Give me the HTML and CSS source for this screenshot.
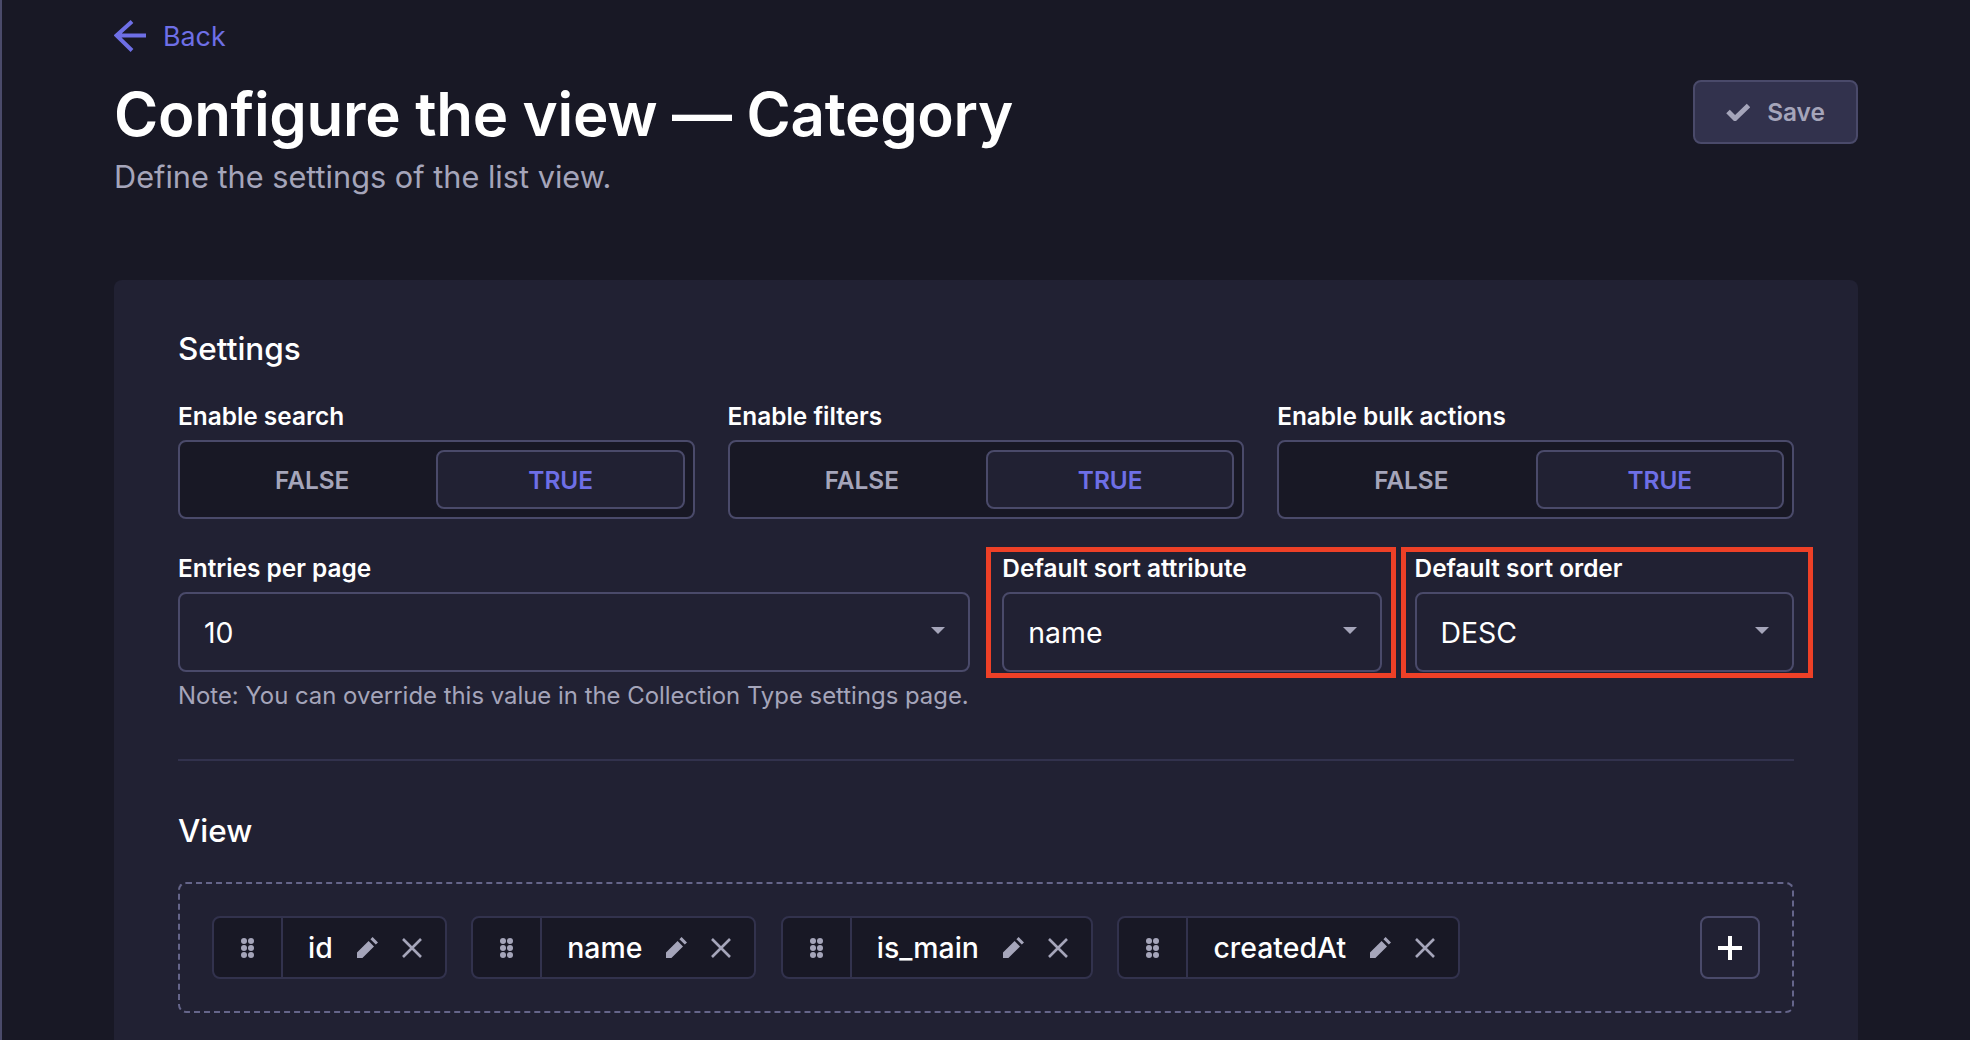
FILE: index.html
```html
<!DOCTYPE html>
<html lang="en">
<head>
<meta charset="utf-8">
<title>Configure the view</title>
<link rel="stylesheet" href="styles.css">
</head>
<body>
<main class="page">
  <a class="back" href="#">
    <svg class="back-icon" viewBox="0 0 32 32" fill="none"><path d="M32 15.5H3.5M18 1.5 2.5 15.5 18 30.5" stroke="currentColor" stroke-width="4"/></svg>
    <span>Back</span>
  </a>
  <header class="head">
    <div>
      <h1 class="title">Configure the view — Category</h1>
      <p class="subtitle">Define the settings of the list view.</p>
    </div>
    <button class="save" type="button">
      <svg class="check" viewBox="0 0 24 18" fill="none"><path d="M2 8.5 9 15.5 22.5 2.5" stroke="currentColor" stroke-width="5"/></svg>
      <span>Save</span>
    </button>
  </header>
  <section class="panel">
    <h2 class="section-title">Settings</h2>
    <div class="grid">
      <div class="field third">
        <label class="label">Enable search</label>
        <div class="toggle"><span class="opt">FALSE</span><span class="opt on">TRUE</span></div>
      </div>
      <div class="field third">
        <label class="label">Enable filters</label>
        <div class="toggle"><span class="opt">FALSE</span><span class="opt on">TRUE</span></div>
      </div>
      <div class="field third">
        <label class="label">Enable bulk actions</label>
        <div class="toggle"><span class="opt">FALSE</span><span class="opt on">TRUE</span></div>
      </div>
      <div class="field half">
        <label class="label">Entries per page</label>
        <div class="select"><span>10</span><i class="caret"></i></div>
        <p class="note">Note: You can override this value in the Collection Type settings page.</p>
      </div>
      <div class="field quarter">
        <span class="mark mark-a"></span>
        <label class="label">Default sort attribute</label>
        <div class="select"><span>name</span><i class="caret"></i></div>
      </div>
      <div class="field quarter">
        <span class="mark mark-b"></span>
        <label class="label">Default sort order</label>
        <div class="select"><span>DESC</span><i class="caret"></i></div>
      </div>
    </div>
    <hr class="rule">
    <h2 class="section-title view-title">View</h2>
    <div class="dash">
      <div class="chip">
        <span class="grip"><svg class="dots" viewBox="0 0 13 20" fill="currentColor"><circle cx="3" cy="3" r="3"/><circle cx="10" cy="3" r="3"/><circle cx="3" cy="10" r="3"/><circle cx="10" cy="10" r="3"/><circle cx="3" cy="17" r="3"/><circle cx="10" cy="17" r="3"/></svg></span>
        <span class="chip-body"><span class="chip-name">id</span>
          <svg class="pencil" viewBox="0 0 21 21" fill="currentColor"><path d="M0 21V15.6L11.6 4 17 9.4 5.4 21ZM13.4 2.2 15.6 0 21 5.4 18.8 7.6Z"/></svg>
          <svg class="close" viewBox="0 0 20 20" fill="none"><path d="M1 1 19 19M19 1 1 19" stroke="currentColor" stroke-width="2.6"/></svg></span>
      </div>
      <div class="chip">
        <span class="grip"><svg class="dots" viewBox="0 0 13 20" fill="currentColor"><circle cx="3" cy="3" r="3"/><circle cx="10" cy="3" r="3"/><circle cx="3" cy="10" r="3"/><circle cx="10" cy="10" r="3"/><circle cx="3" cy="17" r="3"/><circle cx="10" cy="17" r="3"/></svg></span>
        <span class="chip-body"><span class="chip-name">name</span>
          <svg class="pencil" viewBox="0 0 21 21" fill="currentColor"><path d="M0 21V15.6L11.6 4 17 9.4 5.4 21ZM13.4 2.2 15.6 0 21 5.4 18.8 7.6Z"/></svg>
          <svg class="close" viewBox="0 0 20 20" fill="none"><path d="M1 1 19 19M19 1 1 19" stroke="currentColor" stroke-width="2.6"/></svg></span>
      </div>
      <div class="chip">
        <span class="grip"><svg class="dots" viewBox="0 0 13 20" fill="currentColor"><circle cx="3" cy="3" r="3"/><circle cx="10" cy="3" r="3"/><circle cx="3" cy="10" r="3"/><circle cx="10" cy="10" r="3"/><circle cx="3" cy="17" r="3"/><circle cx="10" cy="17" r="3"/></svg></span>
        <span class="chip-body"><span class="chip-name">is_main</span>
          <svg class="pencil" viewBox="0 0 21 21" fill="currentColor"><path d="M0 21V15.6L11.6 4 17 9.4 5.4 21ZM13.4 2.2 15.6 0 21 5.4 18.8 7.6Z"/></svg>
          <svg class="close" viewBox="0 0 20 20" fill="none"><path d="M1 1 19 19M19 1 1 19" stroke="currentColor" stroke-width="2.6"/></svg></span>
      </div>
      <div class="chip">
        <span class="grip"><svg class="dots" viewBox="0 0 13 20" fill="currentColor"><circle cx="3" cy="3" r="3"/><circle cx="10" cy="3" r="3"/><circle cx="3" cy="10" r="3"/><circle cx="10" cy="10" r="3"/><circle cx="3" cy="17" r="3"/><circle cx="10" cy="17" r="3"/></svg></span>
        <span class="chip-body"><span class="chip-name">createdAt</span>
          <svg class="pencil" viewBox="0 0 21 21" fill="currentColor"><path d="M0 21V15.6L11.6 4 17 9.4 5.4 21ZM13.4 2.2 15.6 0 21 5.4 18.8 7.6Z"/></svg>
          <svg class="close" viewBox="0 0 20 20" fill="none"><path d="M1 1 19 19M19 1 1 19" stroke="currentColor" stroke-width="2.6"/></svg></span>
      </div>
      <button class="add" type="button"><svg class="plus" viewBox="0 0 24 24" fill="none"><path d="M12 0V24M0 12H24" stroke="currentColor" stroke-width="4"/></svg></button>
    </div>
  </section>
</main>
</body>
</html>
```
FILE: styles.css
```css
* { box-sizing: border-box; }
html, body { margin: 0; height: 100%; }
body {
  background: #181825;
  color: #fff;
  font-family: Inter, "Noto Sans", sans-serif;
  overflow: hidden;
}
.page {
  height: 1040px;
  overflow: hidden;
  border-left: 2px solid #4a4a6a;
  padding: 20px 112px 0;
}
.back {
  display: flex;
  align-items: center;
  gap: 17px;
  height: 32px;
  color: #6e6fe6;
  font-size: 26.8px;
  text-decoration: none;
}
.back-icon { width: 32px; height: 32px; }
.head {
  display: flex;
  justify-content: space-between;
  align-items: flex-start;
  height: 228px;
  padding-top: 23px;
}
.title {
  margin: 0;
  font-size: 60px;
  line-height: 78px;
  font-weight: 600;
  letter-spacing: -0.3px;
}
.subtitle {
  margin: 4px 0 0;
  font-size: 30.7px;
  line-height: 40px;
  color: #a5a5ba;
  font-weight: 400;
}
.save {
  display: flex;
  align-items: center;
  justify-content: center;
  gap: 17px;
  width: 165px;
  height: 64px;
  margin-top: 5px;
  background: #32324d;
  border: 2px solid #4a4a6a;
  border-radius: 8px;
  color: #a5a5ba;
  font: 600 24.4px Inter, sans-serif;
}
.check { width: 24px; height: 18px; }
.panel {
  height: 760px;
  background: #212133;
  border-radius: 8px 8px 0 0;
  padding: 49px 64px 0;
}
.section-title {
  margin: 0;
  font-size: 31.5px;
  line-height: 40px;
  font-weight: 500;
}
.grid {
  display: grid;
  grid-template-columns: repeat(12, 1fr);
  column-gap: 32.7px;
  row-gap: 33px;
  margin-top: 31px;
}
.field { position: relative; min-width: 0; }
.third { grid-column: span 4; }
.half { grid-column: span 6; }
.quarter { grid-column: span 3; align-self: start; }
.label {
  display: block;
  font-size: 24.4px;
  line-height: 32px;
  font-weight: 600;
  margin-bottom: 8px;
}
.toggle {
  display: flex;
  height: 79px;
  padding: 8px;
  background: #181825;
  border: 2px solid #4a4a6a;
  border-radius: 8px;
}
.opt {
  flex: 1;
  display: flex;
  align-items: center;
  justify-content: center;
  border: 2px solid transparent;
  border-radius: 8px;
  color: #a5a5ba;
  font-size: 24.4px;
  font-weight: 600;
}
.opt.on {
  background: #212133;
  border-color: #4a4a6a;
  color: #6e6fe6;
}
.select {
  display: flex;
  align-items: center;
  justify-content: space-between;
  height: 80px;
  padding: 0 23px 0 24px;
  border: 2px solid #4a4a6a;
  border-radius: 8px;
  font-size: 28.4px;
}
.caret {
  width: 0;
  height: 0;
  margin-top: -4px;
  border-left: 7px solid transparent;
  border-right: 7px solid transparent;
  border-top: 7px solid #a5a5ba;
}
.note {
  margin: 8px 0 0;
  font-size: 23.9px;
  line-height: 32px;
  color: #a5a5ba;
  white-space: nowrap;
}
.mark {
  position: absolute;
  top: -5px;
  bottom: -6px;
  border: 5px solid #ee4027;
  pointer-events: none;
}
.mark-a { left: -16px; right: -14px; }
.mark-b { left: -14px; right: -19px; }
.rule {
  height: 2px;
  margin: 47px 0 0;
  border: 0;
  background: #32324d;
}
.view-title { margin-top: 50px; }
.dash {
  display: flex;
  align-items: center;
  gap: 24.5px;
  height: 131px;
  margin-top: 31px;
  padding: 0 32px;
  border: 2px dashed #65658a;
  border-radius: 8px;
}
.chip {
  display: flex;
  height: 63px;
  background: #181825;
  border: 2px solid #32324d;
  border-radius: 8px;
}
.grip {
  display: flex;
  align-items: center;
  justify-content: center;
  width: 69px;
  border-right: 2px solid #32324d;
  color: #a5a5ba;
}
.dots { width: 13px; height: 20px; }
.chip-body {
  display: flex;
  align-items: center;
  gap: 24px;
  padding: 0 23px 0 25px;
  color: #a5a5ba;
}
.chip-name { color: #fff; font-size: 28.4px; font-weight: 500; }
.pencil { width: 21px; height: 21px; }
.close { width: 20px; height: 20px; }
.add {
  display: flex;
  align-items: center;
  justify-content: center;
  width: 60px;
  height: 63px;
  margin-left: auto;
  padding: 0;
  background: transparent;
  border: 2px solid #4a4a6a;
  border-radius: 8px;
  color: #fff;
}
.plus { width: 24px; height: 24px; }
```
